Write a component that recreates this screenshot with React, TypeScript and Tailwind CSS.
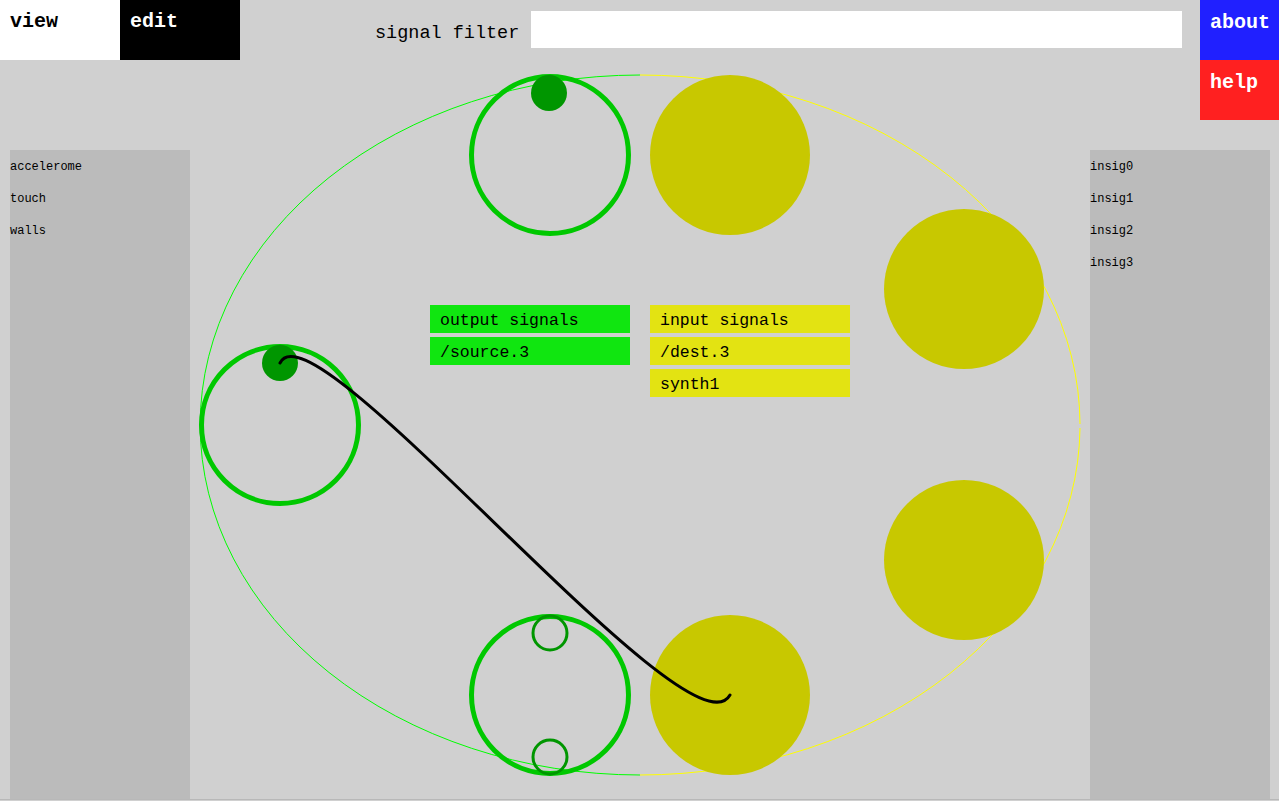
import React from 'react'

const sources = ['accelerome', 'touch', 'walls']
const dests = ['insig0', 'insig1', 'insig2', 'insig3']

const mono = { fontFamily: '"Liberation Mono", "Courier New", monospace' }

function Diagram() {
  const yellow = [
    [730, 155],
    [964, 289],
    [964, 560],
    [730, 695],
  ]
  return (
    <svg
      className="absolute inset-0 pointer-events-none"
      width={1279}
      height={801}
      viewBox="0 0 1279 801"
    >
      {/* outer ellipse, split in two halves */}
      <path d="M640 75 A440 350 0 0 0 640 775" fill="none" stroke="#00ff00" strokeWidth={1} />
      <path d="M640 75 A440 350 0 0 1 1080 424" fill="none" stroke="#ffff00" strokeWidth={1} />
      <path d="M1080 428 A440 350 0 0 1 640 775" fill="none" stroke="#ffff00" strokeWidth={1} />

      {/* source devices */}
      <circle cx={550} cy={155} r={78.5} fill="none" stroke="#00c800" strokeWidth={5} />
      <circle cx={549} cy={93} r={18} fill="#009600" />

      <circle cx={280} cy={425} r={78.5} fill="none" stroke="#00c800" strokeWidth={5} />
      <circle cx={280} cy={363} r={18} fill="#009600" />

      <circle cx={550} cy={695} r={78.5} fill="none" stroke="#00c800" strokeWidth={5} />
      <circle cx={550} cy={633} r={17} fill="none" stroke="#009600" strokeWidth={3} />
      <circle cx={550} cy={757} r={17} fill="none" stroke="#009600" strokeWidth={3} />

      {/* destination devices */}
      {yellow.map(([cx, cy]) => (
        <circle key={`${cx}-${cy}`} cx={cx} cy={cy} r={80} fill="#c8c800" />
      ))}

      {/* connection */}
      <path
        d="M280 363 C312 296, 690 765, 730 695"
        fill="none"
        stroke="#000"
        strokeWidth={3}
        strokeLinecap="round"
      />
    </svg>
  )
}

export default function App() {
  return (
    <div className="relative w-[1279px] h-[801px] overflow-hidden bg-[#d0d0d0]" style={mono}>
      <div className="flex h-[120px]">
        <div className="w-[120px] h-[60px] bg-white text-black text-[20px] font-bold leading-[24px] px-[10px] pt-[10px]">
          view
        </div>
        <div className="w-[120px] h-[60px] bg-black text-white text-[20px] font-bold leading-[24px] px-[10px] pt-[10px]">
          edit
        </div>
        <div className="flex-1 flex items-start h-[60px] pl-[135px] pr-[18px] pt-[11px]">
          <span className="text-[18.5px] leading-[37px] text-black mr-[12px] pt-[4px]">signal filter</span>
          <input type="text" className="flex-1 h-[37px] bg-white border-0 outline-none px-2" />
        </div>
        <div className="w-[79px] flex flex-col">
          <div className="h-[60px] bg-[#2020ff] text-white text-[20px] font-bold leading-[24px] px-[10px] pt-[11px]">
            about
          </div>
          <div className="h-[60px] bg-[#ff2020] text-white text-[20px] font-bold leading-[24px] px-[10px] pt-[11px]">
            help
          </div>
        </div>
      </div>

      <div className="flex mt-[30px] h-[650px] border-b border-[#b8b8b8]">
        <div className="ml-[10px] w-[180px] bg-[#bbbbbb] text-[12px] text-black pt-[1px]">
          {sources.map((s) => (
            <div key={s} className="h-[32px] leading-[32px]">
              {s}
            </div>
          ))}
        </div>
        <div className="w-[900px]" />
        <div className="w-[180px] bg-[#bbbbbb] text-[12px] text-black pt-[1px]">
          {dests.map((s) => (
            <div key={s} className="h-[32px] leading-[32px]">
              {s}
            </div>
          ))}
        </div>
      </div>

      <Diagram />

      <div className="absolute left-[430px] top-[305px] flex gap-[20px] text-[16.5px] text-black">
        <div className="flex flex-col gap-[4px] w-[200px]">
          <div className="h-[28px] leading-[28px] px-[10px] pt-[2px] bg-[#10e610]">output signals</div>
          <div className="h-[28px] leading-[28px] px-[10px] pt-[2px] bg-[#10e610]">/source.3</div>
        </div>
        <div className="flex flex-col gap-[4px] w-[200px]">
          <div className="h-[28px] leading-[28px] px-[10px] pt-[2px] bg-[#e3e312]">input signals</div>
          <div className="h-[28px] leading-[28px] px-[10px] pt-[2px] bg-[#e3e312]">/dest.3</div>
          <div className="h-[28px] leading-[28px] px-[10px] pt-[2px] bg-[#e3e312]">synth1</div>
        </div>
      </div>
    </div>
  )
}
